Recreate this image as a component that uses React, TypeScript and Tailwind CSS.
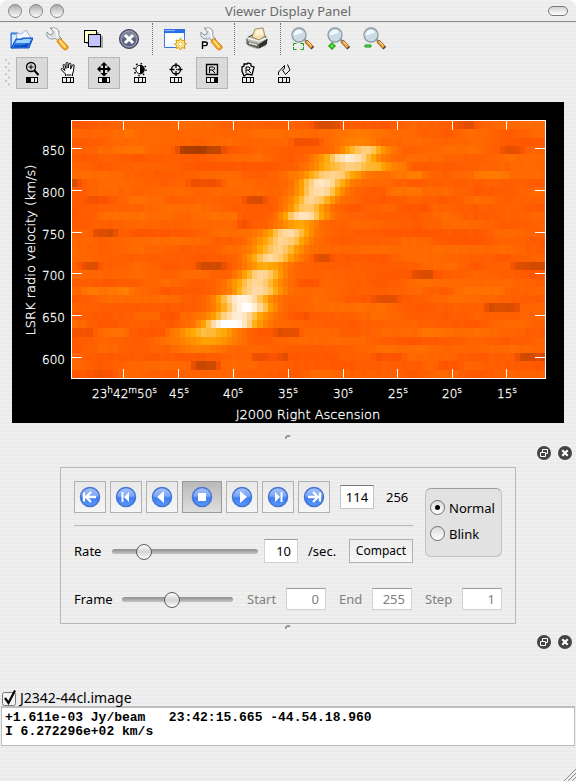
import { useState } from "react";
import type { ReactNode } from "react";

// ---------- raster ----------

const COLS = 92;
const ROWS = 31;
const AREA = { x: 72, y: 121, w: 474, h: 257 };

// colour map stops, value -> rgb
const STOPS: [number, number[]][] = [
  [0, [168, 60, 0]],
  [0.14, [212, 76, 0]],
  [0.24, [255, 84, 0]],
  [0.36, [255, 108, 0]],
  [0.48, [255, 134, 0]],
  [0.6, [255, 166, 0]],
  [0.7, [255, 190, 70]],
  [0.8, [255, 212, 145]],
  [0.9, [255, 232, 200]],
  [1, [255, 255, 255]],
];

// row, centre, half width, peak value
const RIDGE: [number, number, number, number][] = [
  [1, 362, 26, 0.38],
  [2, 364, 26, 0.45],
  [3, 365, 23, 0.76],
  [4, 350, 28, 0.88],
  [5, 352, 34, 0.78],
  [6, 334, 28, 0.77],
  [7, 322, 25, 0.84],
  [8, 319, 23, 0.84],
  [9, 313, 22, 0.81],
  [10, 308, 21, 0.81],
  [11, 303, 21, 0.87],
  [12, 299, 22, 0.63],
  [13, 289, 22, 0.79],
  [14, 284, 24, 0.79],
  [15, 278, 23, 0.77],
  [16, 272, 23, 0.78],
  [17, 267, 23, 0.66],
  [18, 262, 23, 0.78],
  [19, 257, 24, 0.77],
  [20, 257, 26, 0.78],
  [21, 245, 26, 0.95],
  [22, 245, 26, 0.99],
  [23, 239, 26, 0.93],
  [24, 230, 27, 1.01],
  [25, 207, 30, 0.71],
  [26, 209, 30, 0.57],
  [27, 200, 30, 0.42],
];

// row, left, right, change of value
const PATCHES: [number, number, number, number][] = [
  [3, 180, 220, -0.18],
  [3, 184, 204, -0.08],
  [7, 190, 221, -0.16],
  [7, 72, 77, -0.12],
  [9, 88, 108, -0.08],
  [13, 96, 114, -0.18],
  [17, 82, 87, -0.12],
  [17, 92, 97, -0.12],
  [0, 315, 338, -0.12],
  [2, 295, 318, -0.11],
  [9, 247, 252, -0.11],
  [9, 257, 262, -0.11],
  [12, 242, 247, -0.11],
  [17, 200, 222, -0.15],
  [16, 317, 329, -0.12],
  [19, 303, 318, -0.09],
  [23, 163, 176, -0.12],
  [23, 293, 307, -0.08],
  [25, 278, 298, -0.12],
  [25, 72, 90, -0.08],
  [25, 133, 163, -0.08],
  [28, 255, 285, -0.1],
  [28, 285, 335, -0.08],
  [29, 195, 216, -0.22],
  [30, 92, 113, -0.09],
  [0, 458, 473, -0.11],
  [3, 504, 520, -0.08],
  [10, 400, 427, -0.1],
  [17, 514, 546, -0.16],
  [18, 417, 430, -0.11],
  [21, 376, 396, -0.09],
  [22, 488, 517, -0.17],
  [28, 376, 401, -0.1],
  [28, 520, 546, -0.2],
  [29, 441, 447, -0.11],
  [29, 453, 458, -0.11],
  [20, 88, 126, 0.1],
  [8, 390, 418, 0.08],
  [5, 376, 406, 0.1],
  [6, 376, 420, 0.08],
  [20, 456, 500, 0.08],
  [1, 95, 130, 0.06],
  [3, 100, 145, 0.06],
  [11, 100, 145, 0.07],
  [9, 130, 165, 0.07],
  [11, 195, 235, 0.07],
  [6, 477, 505, 0.06],
  [25, 425, 450, 0.07],
  [25, 103, 123, 0.08],
];

function noise(a: number, b: number) {
  const s = Math.sin(a * 127.1 + b * 311.7) * 43758.5453;
  return s - Math.floor(s);
}

function valueAt(col: number, row: number) {
  const x = AREA.x + ((col + 0.5) * AREA.w) / COLS;
  // slow drift along the row plus a little grain
  const step = col / 6;
  const i = Math.floor(step);
  const t = step - i;
  const drift = noise(i, row) * (1 - t) + noise(i + 1, row) * t;
  let v = 0.31 + (drift - 0.5) * 0.12 + (noise(col, row + 70) - 0.5) * 0.03;
  for (const [r, left, right, amount] of PATCHES) {
    if (r !== row) continue;
    const outside = Math.max(left - x, x - right, 0);
    if (outside < 10) v += amount * (1 - outside / 10) ** 2;
  }
  for (const [r, c, half, peak] of RIDGE) {
    if (r === row) {
      v += (peak - 0.31) * Math.exp(-Math.pow(Math.abs(x - c) / half, 2.1));
    }
  }
  return Math.min(1, Math.max(0, v));
}

function colour(v: number) {
  const n = STOPS.findIndex(([s]) => s >= v);
  if (n <= 0) return `rgb(${STOPS[0][1].join(",")})`;
  const [a, ca] = STOPS[n - 1];
  const [b, cb] = STOPS[n];
  const t = (v - a) / (b - a);
  return `rgb(${ca.map((c, k) => Math.round(c + (cb[k] - c) * t)).join(",")})`;
}

const CELLS = Array.from({ length: ROWS * COLS }, (_, n) => {
  const row = Math.floor(n / COLS);
  const col = n % COLS;
  const x = AREA.x + Math.round((col * AREA.w) / COLS);
  const y = AREA.y + Math.round((row * AREA.h) / ROWS);
  return { n, x, y, fill: colour(valueAt(col, row)) };
});

const X_TICKS = [123, 178, 233, 288, 343, 397, 452, 506];
const X_LABELS: [number, string][] = [
  [169, "45"],
  [223, "40"],
  [278, "35"],
  [333, "30"],
  [388, "25"],
  [442, "20"],
  [497, "15"],
];
const Y_TICKS: [number, string][] = [
  [148, "850"],
  [190, "800"],
  [232, "750"],
  [273, "700"],
  [315, "650"],
  [357, "600"],
];

function Plot() {
  return (
    <svg viewBox="12 102 552 321" className="block w-full bg-black" role="img" aria-label="Position velocity image">
      <g shapeRendering="crispEdges">
        {CELLS.map((c) => (
          <rect key={c.n} x={c.x} y={c.y} width="6" height="9" fill={c.fill} />
        ))}
        <path d="M546 121h18v258h-18zM71 378h493v10H71z" fill="#000" />
        <path
          d="M71 120h475v1H71zM71 378h475v1H71zM71 120h1v259h-1zM545 120h1v259h-1z"
          fill="#fff"
        />
        {X_TICKS.map((x) => (
          <path key={x} d={`M${x} 120h1v10h-1zM${x} 369h1v10h-1z`} fill="#fff" />
        ))}
        {Y_TICKS.map(([y]) => (
          <path key={y} d={`M71 ${y}h11v1h-11zM535 ${y}h11v1h-11z`} fill="#fff" />
        ))}
      </g>
      <g
        fill="#fff"
        stroke="#fff"
        strokeWidth=".3"
        className="font-['DejaVu_Sans',sans-serif] text-[12px] font-extralight"
      >
        {Y_TICKS.map(([y, label]) => (
          <text key={y} x="65" y={y + 7} textAnchor="end">
            {label}
          </text>
        ))}
        <text x="92" y="398">
          23<tspan dy="-5" fontSize="9">h</tspan>
          <tspan dy="5">42</tspan>
          <tspan dy="-5" fontSize="9">m</tspan>
          <tspan dy="5">50</tspan>
          <tspan dy="-5" fontSize="9">s</tspan>
        </text>
        {X_LABELS.map(([x, label]) => (
          <text key={x} x={x} y="398">
            {label}
            <tspan dy="-5" fontSize="9">s</tspan>
          </text>
        ))}
        <text x="308" y="419" textAnchor="middle" className="text-[13px]">
          J2000 Right Ascension
        </text>
        <text transform="translate(35 250) rotate(-90)" textAnchor="middle" className="text-[13px]">
          LSRK radio velocity (km/s)
        </text>
      </g>
    </svg>
  );
}

// ---------- main toolbar icons (24 x 24) ----------

function FolderIcon() {
  return (
    <svg viewBox="0 0 24 24" className="size-6">
      <path d="M2 21V6h7l2 3h9v11z" fill="#7fb4f2" stroke="#1c5fd0" />
      <path d="M3 8h5v10H3z" fill="#d9ecff" />
      <path d="M7 14l1-8 4 1 5-4 5 8-4 5z" fill="#f4f6ff" stroke="#8f9dcc" strokeWidth=".8" />
      <path d="M2 21l5-9h5l2-1h10l-4 10z" fill="#2d7be8" stroke="#1550c0" />
      <path d="M8 13h5l2-1h7l-2 4H6z" fill="#9fd4ff" />
      <path d="M20 16l-2 4H5l1-2c5 1 10 0 14-2z" fill="#0d48bd" />
    </svg>
  );
}

function WrenchIcon({ print }: { print?: boolean }) {
  return (
    <svg viewBox="0 0 24 24" className="size-6">
      <path
        d="M5 1l3 3v3L5 8 2 5c-1 4 1 7 5 7 2 0 3-1 4 0l3 3 3-3-3-3c-1-1 0-2 0-3 0-3-2-5-5-5z"
        fill="#dfe3e7"
        stroke="#868e96"
        strokeWidth=".9"
      />
      <path d="M8 2c3 0 4 2 4 4s0 3 1 4" fill="none" stroke="#fff" strokeWidth="1.500" />
      <path d="M12 15c0-2 2-4 4-3l7 7c1 2-1 4-3 4-2 0-5-5-8-8z" fill="#f7a01c" stroke="#c97d20" strokeWidth=".7" />
      <path d="M15 14l5 6" stroke="#ffe083" strokeWidth="2" strokeLinecap="round" />
      {print && <path d="M3.500 22v-7h3a1.800 1.800 0 0 1 0 3.600h-3" fill="none" stroke="#000" strokeWidth="1.400" />}
    </svg>
  );
}

function LayersIcon() {
  return (
    <svg viewBox="0 0 24 24" className="size-6" shapeRendering="crispEdges">
      <path d="M5 5h13v12H5zM9 9h13v12H9z" fill="#a5a5a5" />
      <path d="M3.500 3.500h12v12h-12z" fill="#ffffc4" stroke="#000" />
      <path d="M7.500 7.500h12v12h-12z" fill="#c4c4ff" stroke="#000" />
    </svg>
  );
}

function CloseIcon() {
  return (
    <svg viewBox="0 0 24 24" className="size-6">
      <circle cx="12" cy="12" r="9.500" fill="#5d6180" stroke="#3f4358" />
      <circle cx="12" cy="12" r="8" fill="none" stroke="#a9acbb" />
      <path d="M4 12a8 8 0 0 1 16 0c-5-2-11-2-16 0z" fill="#9497aa" opacity=".6" />
      <path d="M8 8l8 8M16 8l-8 8" stroke="#fff" strokeWidth="3" />
    </svg>
  );
}

function NewWindowIcon() {
  return (
    <svg viewBox="0 0 24 24" className="size-6">
      <path d="M1.500 2.500h20v18h-20z" fill="#eef5ff" stroke="#3c78d8" />
      <path d="M2 7h19L2 19z" fill="#fff" />
      <path d="M1 2h21v4H1z" fill="#2c6fe3" />
      <path d="M2 3h10v1H2z" fill="#8db9f8" />
      <path
        d="M17.500 11l1.500 3 3-1-1 3 2.500 1.200-2.500 1.300 1 3-3-1-1.500 2.500-1.500-2.500-3 1 1-3-2.500-1.300 2.500-1.200-1-3 3 1z"
        fill="#fff2a8"
        stroke="#e19a00"
      />
      <circle cx="17.500" cy="17.200" r="2" fill="#fff" stroke="#f0b840" />
    </svg>
  );
}

function PrinterIcon() {
  return (
    <svg viewBox="0 0 24 24" className="size-6">
      <path d="M4 15l17-6 2 4-2 6-9 3-9-3z" fill="#aaa" />
      <path d="M2 11l5-3h12l3 4-1 5-7 4-12-4z" fill="#b7bcb4" stroke="#34372f" />
      <path d="M2 11l12 3 8-3" fill="none" stroke="#f3f3ee" strokeWidth="1.500" />
      <path d="M7 10l3-8 8-1 2 8-6 4z" fill="#f6deb0" stroke="#8d7b57" strokeWidth=".8" />
      <path d="M11 3l6-1 1 6-8 1z" fill="#fff1cf" />
      <path d="M2 14l12 3v4L2 17z" fill="#686d66" />
      <path d="M4 16l8 2" stroke="#e4e7df" strokeWidth="1.500" />
      <path d="M14 17l8-5v5l-8 4z" fill="#2d302c" />
    </svg>
  );
}

function LensIcon({ children }: { children: ReactNode }) {
  return (
    <svg viewBox="0 0 24 24" className="size-6">
      <path d="M13 12l3 3" stroke="#888" strokeWidth="2" />
      <path d="M15 14l6.500 7" stroke="#8a5a20" strokeWidth="4" />
      <path d="M15.500 14.500l5.500 6" stroke="#f5a63a" strokeWidth="2.500" />
      <path d="M16.500 14.500l4 4" stroke="#ffe0a0" />
      <path d="M20 22l2.500-2.500" stroke="#584130" strokeWidth="1.500" />
      <circle cx="8" cy="8" r="7" fill="#ccdce6" stroke="#8f999f" strokeWidth="1.300" />
      <path d="M3 8a5 5 0 0 1 5-5c3 0 4 2 3 3-3 0-5 3-8 2z" fill="#f4fbff" />
      {children}
    </svg>
  );
}

function ToolButton({ label, children }: { label: string; children: ReactNode }) {
  return (
    <button aria-label={label} className="flex size-8 items-center justify-center">
      {children}
    </button>
  );
}

function Separator() {
  return (
    <div className="flex h-8 w-1.5 justify-center">
      <div className="h-full border-l border-dotted border-gray-500" />
    </div>
  );
}

// ---------- mouse tools ----------

const MOUSE_TOOLS: { label: string; cell: number; art: ReactNode }[] = [
  {
    label: "Zoom",
    cell: 0,
    art: (
      <>
        <circle cx="11" cy="6" r="4.500" fill="none" stroke="#000" strokeWidth="1.300" />
        <path d="M8.500 6h5M11 3.500v5" stroke="#000" />
        <path d="M14 9l4.500 5" stroke="#000" strokeWidth="2" />
      </>
    ),
  },
  {
    label: "Pan",
    cell: -1,
    art: (
      <path
        d="M9.500 15v-2l-4-4c-1-1 0-2 1-1.500l2.500 2L7 4.500C7 3 8.500 3 9 4.500l1 3V2.500c0-1.500 2-1.500 2 0V7l1-4c.5-1.500 2-1 2 .5L14.500 8l2-4c1-1 2 0 1.500 1L17.500 10l-1 3v2M10.500 14h5"
        fill="#f8f8f8"
        stroke="#000"
      />
    ),
  },
  {
    label: "Move",
    cell: 1,
    art: (
      <>
        <path d="M12 3v11M6 8h12" stroke="#000" strokeWidth="2" />
        <path d="M12 1l3.500 3.500h-7zM12 15.500l3.500-3.500h-7zM5 8l3.500-3.500v7zM19 8l-3.500-3.500v7z" />
      </>
    ),
  },
  {
    label: "Colormap shift",
    cell: -1,
    art: (
      <>
        <circle cx="12" cy="8.500" r="4.200" fill="#fff" stroke="#000" />
        <path d="M12 4a4.500 4.500 0 0 1 0 9z" />
        <circle cx="12" cy="8.500" r="6" fill="none" stroke="#000" strokeWidth="1.500" strokeDasharray="1.500 3.200" />
      </>
    ),
  },
  {
    label: "Position",
    cell: -1,
    art: (
      <>
        <circle cx="12" cy="8.500" r="4.500" fill="none" stroke="#000" strokeWidth="1.300" />
        <path d="M12 2v5M12 10v5M5.500 8.500h5M13.500 8.500h5" stroke="#000" strokeWidth="1.300" />
        <path d="M12 8h1v1h-1z" />
      </>
    ),
  },
  {
    label: "Rectangle region",
    cell: 2,
    art: (
      <>
        <path d="M6.500 3.500h11v10h-11z" fill="none" stroke="#000" strokeWidth="1.300" />
        <path d="M9.500 12V6h4l1 1v1l-1 1h-4M12 9l3 3" fill="none" stroke="#000" />
      </>
    ),
  },
  {
    label: "Polygon region",
    cell: -1,
    art: (
      <>
        <path d="M8 3h3l1-1 3 1v2l3 1-1 4-1 4-5-1-3 2-2-5V6l2-1z" fill="none" stroke="#000" strokeWidth="1.300" />
        <path d="M10 12V6h3l1 1v1l-1 1h-3M12 9l3 3" fill="none" stroke="#000" />
      </>
    ),
  },
  {
    label: "Polyline",
    cell: -1,
    art: <path d="M6.500 14v-3l6-6.500v3l-2 1.500 3 4.500 4.500-4.500-2.500-5.500" fill="none" stroke="#000" />,
  },
];

function MouseTool({ tool }: { tool: (typeof MOUSE_TOOLS)[number] }) {
  const active = tool.cell >= 0;
  return (
    <button
      aria-label={tool.label}
      aria-pressed={active}
      className={
        "flex size-8 items-center justify-center border " +
        (active ? "border-[#b4b4b4] bg-[#dadada]" : "border-transparent")
      }
    >
      <svg viewBox="0 0 24 24" className="size-6 shrink-0">
        {tool.art}
        <g shapeRendering="crispEdges">
          <path d="M6.500 16.500h11v5h-11zM10.500 16v6M14.500 16v6" fill="#eee" stroke="#000" />
          {active && <rect x={6 + tool.cell * 4} y="16" width="4" height="6" />}
        </g>
      </svg>
    </button>
  );
}

// ---------- animator ----------

const TRANSPORT: { label: string; d: string; line?: boolean }[] = [
  { label: "To start", d: "M5 6.500v9M17 11H8M12 6l-5 5 5 5", line: true },
  { label: "Step back", d: "M6.500 6h2v10h-2zM14 6v10l-5-5z" },
  { label: "Play reverse", d: "M13 5v12l-7-6z" },
  { label: "Stop", d: "M7 7h8v8H7z" },
  { label: "Play", d: "M9 5v12l7-6z" },
  { label: "Step forward", d: "M13.500 6h2v10h-2zM8 6v10l5-5z" },
  { label: "To end", d: "M17 6.500v9M5 11h9M10 6l5 5-5 5", line: true },
];

function TransportButton({ item }: { item: (typeof TRANSPORT)[number] }) {
  const stop = item.label === "Stop";
  return (
    <button
      aria-label={item.label}
      className={
        "flex h-8 items-center justify-center border " +
        (stop
          ? "w-10 border-[#999] bg-linear-to-b from-[#b9b9b9] to-[#dedede]"
          : "w-8 border-[#b0b0b0] bg-linear-to-b from-[#e9e9e9] to-[#f6f6f6]")
      }
    >
      <svg viewBox="0 0 22 22" className="size-[22px] shrink-0">
        <defs>
          <linearGradient id="ball" x1="0" y1="0" x2="0" y2="1">
            <stop offset="0" stopColor="#a9c4fb" />
            <stop offset=".45" stopColor="#7ca6f7" />
            <stop offset=".55" stopColor="#3f7df0" />
            <stop offset="1" stopColor="#5b9bff" />
          </linearGradient>
        </defs>
        <circle cx="11" cy="11" r="9.500" fill="url(#ball)" stroke="#4474cf" strokeWidth="1.500" />
        {item.line ? (
          <path d={item.d} fill="none" stroke="#fff" strokeWidth="2.300" />
        ) : (
          <path d={item.d} fill="#fff" />
        )}
      </svg>
    </button>
  );
}

const SLIDER =
  "h-4 min-w-0 appearance-none bg-transparent [&::-webkit-slider-runnable-track]:h-[5px] [&::-webkit-slider-runnable-track]:rounded-full [&::-webkit-slider-runnable-track]:bg-linear-to-b [&::-webkit-slider-runnable-track]:from-[#8f8f8f] [&::-webkit-slider-runnable-track]:to-[#c4c4c4] [&::-webkit-slider-thumb]:-mt-[5px] [&::-webkit-slider-thumb]:size-4 [&::-webkit-slider-thumb]:appearance-none [&::-webkit-slider-thumb]:rounded-full [&::-webkit-slider-thumb]:border [&::-webkit-slider-thumb]:border-[#5c5c5c] [&::-webkit-slider-thumb]:bg-linear-to-b [&::-webkit-slider-thumb]:from-[#fdfdfd] [&::-webkit-slider-thumb]:via-[#d4d4d4] [&::-webkit-slider-thumb]:to-white";

const FIELD = "border border-[#d2d2d2] border-t-[#9a9a9a] bg-white text-right";

const RADIO =
  "grid size-[15px] appearance-none place-items-center rounded-full border border-[#6e6e6e] bg-linear-to-b from-[#dcdcdc] to-white before:size-[5px] before:rounded-full checked:before:bg-black";

function Animator() {
  const [rate, setRate] = useState("10");
  const [frame, setFrame] = useState("114");
  const [mode, setMode] = useState("Normal");

  return (
    <section className="mx-[60px] mt-[7px] border border-[#b8b8b8] px-[13px] pt-[13px] pb-3">
      <div className="flex gap-3">
        <div className="flex-1">
          <div className="flex items-center gap-1 border-b border-[#b4b4b4] pb-3">
            {TRANSPORT.map((item) => (
              <TransportButton key={item.label} item={item} />
            ))}
            <input
              aria-label="Channel"
              className="ml-1.5 h-6 w-[34px] border border-[#c4c4c4] border-t-[#777] bg-white text-center"
              value={frame}
              onChange={(e) => setFrame(e.target.value)}
            />
            <span className="ml-2">256</span>
          </div>
          <div className="mt-[13px] flex h-6 items-center">
            <label htmlFor="rate" className="w-[38px]">Rate</label>
            <input
              id="rate"
              type="range"
              min="1"
              max="50"
              value={rate}
              onChange={(e) => setRate(e.target.value)}
              className={SLIDER + " w-0 flex-1"}
            />
            <input
              aria-label="Frames per second"
              className={FIELD + " ml-1.5 h-6 w-[34px] pr-1.5"}
              value={rate}
              onChange={(e) => setRate(e.target.value)}
            />
            <span className="ml-2.5 w-[41px]">/sec.</span>
            <button className="h-6 w-16 border border-[#b0b0b0] bg-linear-to-b from-[#ececec] to-[#f8f8f8] text-[12px]">
              Compact
            </button>
          </div>
        </div>
        <fieldset className="mt-[7px] flex h-[69px] w-[77px] flex-col justify-center gap-[11px] rounded-md border border-[#c2c2c2] border-t-[#9c9c9c] bg-[#e2e2e2] pb-1 pl-1">
          {["Normal", "Blink"].map((name) => (
            <label key={name} className="flex h-[15px] items-center gap-1">
              <input
                type="radio"
                name="mode"
                className={RADIO}
                checked={mode === name}
                onChange={() => setMode(name)}
              />
              {name}
            </label>
          ))}
        </fieldset>
      </div>
      <div className="mt-6 flex h-6 items-center">
        <label htmlFor="frame" className="w-12">Frame</label>
        <input
          id="frame"
          type="range"
          min="0"
          max="255"
          value={frame}
          onChange={(e) => setFrame(e.target.value)}
          className={SLIDER + " w-0 flex-1"}
        />
        <label htmlFor="start" className="ml-3.5 w-[39px] text-[#808080]">Start</label>
        <input id="start" disabled className={FIELD + " h-[22px] w-10 pr-1.5 text-[#808080]"} value="0" />
        <label htmlFor="end" className="ml-[13px] w-[33px] text-[#808080]">End</label>
        <input id="end" disabled className={FIELD + " h-[22px] w-10 pr-1.5 text-[#808080]"} value="255" />
        <label htmlFor="step" className="ml-[13px] w-[37px] text-[#808080]">Step</label>
        <input id="step" disabled className={FIELD + " h-[22px] w-10 pr-1.5 text-[#808080]"} value="1" />
      </div>
    </section>
  );
}

// ---------- dock chrome ----------

function DockHeader() {
  return (
    <div className="flex justify-end gap-[7px] pr-1">
      <button aria-label="Float panel" className="size-3.5">
        <svg viewBox="0 0 14 14">
          <circle cx="7" cy="7" r="7" fill="#444" />
          <path d="M5.500 6V3.500h5v4H9M3.500 6.500h5v4h-5z" fill="none" stroke="#fff" />
        </svg>
      </button>
      <button aria-label="Close panel" className="size-3.5">
        <svg viewBox="0 0 14 14">
          <circle cx="7" cy="7" r="7" fill="#444" />
          <path d="M4.300 4.300l5.400 5.400M9.700 4.300L4.300 9.700" stroke="#fff" strokeWidth="2.200" />
        </svg>
      </button>
    </div>
  );
}

function SplitDot() {
  return (
    <svg viewBox="0 0 6 4" className="mx-auto h-1 w-1.5">
      <path d="M.5 3.500C1 1 3 0 5 1.500" fill="none" stroke="#666" strokeWidth="1.300" />
      <path d="M3 3.500h2" stroke="#fff" />
    </svg>
  );
}

const LIGHT =
  "size-3.5 rounded-full border border-[#868686] bg-linear-to-b from-[#a9a9a9] via-[#d6d6d6] to-[#fafafa]";

export default function App() {
  const [shown, setShown] = useState(true);

  return (
    <div className="bg-white">
      <div className="flex min-h-screen flex-col rounded-t-lg bg-[repeating-linear-gradient(to_bottom,#efefef_0px,#efefef_2px,#ebebeb_2px,#ebebeb_4px)] font-['Noto_Sans','Open_Sans',sans-serif] text-[13px] leading-4 text-black">
        <header className="flex h-[22px] items-center border-b border-[#858585] px-2">
          <div className="flex w-16 gap-[7px]">
            <button aria-label="Close" className={LIGHT} />
            <button aria-label="Minimize" className={LIGHT} />
            <button aria-label="Zoom window" className={LIGHT} />
          </div>
          <h1 className="flex-1 text-center text-[#6a6a6a]">Viewer Display Panel</h1>
          <div className="flex w-16 justify-end">
            <button
              aria-label="Toggle toolbar"
              className="h-2.5 w-5 rounded-full border border-[#777] bg-linear-to-b from-[#d4d4d4] to-white"
            />
          </div>
        </header>

        <div className="mt-px flex gap-1 pl-[5px]">
          <ToolButton label="Open"><FolderIcon /></ToolButton>
          <ToolButton label="Data options"><WrenchIcon /></ToolButton>
          <ToolButton label="Register"><LayersIcon /></ToolButton>
          <ToolButton label="Close data"><CloseIcon /></ToolButton>
          <Separator />
          <ToolButton label="New panel"><NewWindowIcon /></ToolButton>
          <ToolButton label="Panel options"><WrenchIcon print /></ToolButton>
          <Separator />
          <ToolButton label="Print"><PrinterIcon /></ToolButton>
          <Separator />
          <ToolButton label="Unzoom">
            <LensIcon>
              <path
                d="M2.500 19v-2.500h3M9.500 16.500h3V19M2.500 20v2.500h3M9.500 22.500h3V20"
                fill="none"
                stroke="#169a16"
              />
            </LensIcon>
          </ToolButton>
          <ToolButton label="Zoom in">
            <LensIcon>
              <path d="M4 16h2v2h2v2H6v2H4v-2H2v-2h2z" fill="#5cf03c" stroke="#15961a" />
            </LensIcon>
          </ToolButton>
          <ToolButton label="Zoom out">
            <LensIcon>
              <path d="M2 18h6v2H2z" fill="#5cf03c" stroke="#15961a" />
            </LensIcon>
          </ToolButton>
        </div>

        <div className="mt-0.5 flex gap-1 pl-1">
          <div className="flex h-8 w-2 items-center">
            <svg viewBox="0 0 8 30" className="h-[30px] w-2">
              {[0, 1, 2, 3, 4, 5, 6, 7].map((n) => (
                <rect key={n} x={1 + (n % 2) * 3} y={1 + n * 3.5} width="2" height="2" fill="#c6c6c6" />
              ))}
            </svg>
          </div>
          {MOUSE_TOOLS.map((tool) => (
            <MouseTool key={tool.label} tool={tool} />
          ))}
        </div>

        <div className="mx-3 mt-[13px]">
          <Plot />
        </div>

        <div className="h-[23px] pt-3"><SplitDot /></div>
        <DockHeader />
        <Animator />
        <div className="h-[11px] pt-px"><SplitDot /></div>
        <DockHeader />

        <section className="mt-10 px-px">
          <label className="flex h-[17px] w-fit items-center gap-[3px] text-[14px]">
            <input
              type="checkbox"
              className="peer sr-only"
              checked={shown}
              onChange={() => setShown(!shown)}
            />
            <svg viewBox="0 0 16 18" className="h-[18px] w-4 [&>.tick]:invisible peer-checked:[&>.tick]:visible">
              <rect x="1.500" y="3.500" width="13" height="13" rx="2" fill="#f4f4f4" stroke="#777" />
              <path className="tick" d="M4 9l3.500 5L14 1.500" fill="none" stroke="#000" strokeWidth="2.200" />
            </svg>
            J2342-44cl.image
          </label>
          <pre className="h-10 border border-t-2 border-[#bdbdbd] bg-white px-[3px] pt-[3px] font-['Liberation_Mono',monospace] text-[13px] leading-[14px] font-bold">
            {"+1.611e-03 Jy/beam   23:42:15.665 -44.54.18.960\nI 6.272296e+02 km/s"}
          </pre>
        </section>

        <footer className="mt-auto flex justify-end">
          <svg viewBox="0 0 12 12" className="size-3">
            <path d="M0 12L12 0M4 12l8-8M8 12l4-4" stroke="#8a8a8a" />
          </svg>
        </footer>
      </div>
    </div>
  );
}
